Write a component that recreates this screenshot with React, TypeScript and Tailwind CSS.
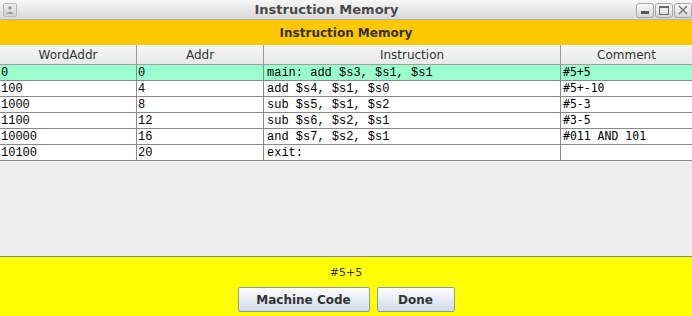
import React from "react";

const rows = [
  { word: "0", addr: "0", ins: "main: add $s3, $s1, $s1", comment: "#5+5" },
  { word: "100", addr: "4", ins: "add $s4, $s1, $s0", comment: "#5+-10" },
  { word: "1000", addr: "8", ins: "sub $s5, $s1, $s2", comment: "#5-3" },
  { word: "1100", addr: "12", ins: "sub $s6, $s2, $s1", comment: "#3-5" },
  { word: "10000", addr: "16", ins: "and $s7, $s2, $s1", comment: "#011 AND 101" },
  { word: "10100", addr: "20", ins: "exit:", comment: "" },
];

const headers = ["WordAddr", "Addr", "Instruction", "Comment"];

const TitleButton = ({ children }: { children: React.ReactNode }) => (
  <div className="w-[18px] h-[15px] flex items-center justify-center rounded-[3px] border border-[#a8a8a8] bg-gradient-to-b from-[#fbfbfb] to-[#d6d6d6]">
    {children}
  </div>
);

export default function App() {
  const sans = "font-['DejaVu_Sans',sans-serif]";
  return (
    <div className={`w-[692px] h-[316px] flex flex-col overflow-hidden bg-[#eeeeee] ${sans}`}>
      {/* window title bar */}
      <div className="h-[20px] shrink-0 flex items-center bg-gradient-to-b from-[#f7f7f7] to-[#d9d9d9] border-b border-[#b5b5b5] pl-[3px]">
        <div className="w-[14px] h-[14px] rounded-[2px] border border-[#b8b8b8] bg-gradient-to-b from-[#f0f0f0] to-[#cfcfcf] flex items-center justify-center">
          <svg width="10" height="10" viewBox="0 0 10 10">
            <circle cx="5" cy="3" r="1.8" fill="#9a9a9a" />
            <path d="M1.5 9 Q5 4.5 8.5 9 Z" fill="#9a9a9a" />
          </svg>
        </div>
        <div className="flex-1 text-center text-[13px] font-bold text-[#4a4a4a] leading-none">
          Instruction Memory
        </div>
        <div className="flex gap-px pt-[1px]">
          <TitleButton>
            <div className="w-[8px] h-[3px] bg-[#5a5a5a] mt-[5px]" />
          </TitleButton>
          <TitleButton>
            <div className="w-[10px] h-[9px] border border-[#6a6a6a] border-t-2" />
          </TitleButton>
          <TitleButton>
            <svg width="10" height="10" viewBox="0 0 10 10">
              <path d="M1 1 L9 9 M9 1 L1 9" stroke="#7a7a7a" strokeWidth="1.5" />
            </svg>
          </TitleButton>
        </div>
      </div>

      {/* orange heading */}
      <div className="h-[25px] shrink-0 bg-[#ffc800] flex items-center justify-center text-[12px] font-bold text-[#333333]">
        Instruction Memory
      </div>

      {/* table */}
      <div className="grid grid-cols-[137px_127px_297px_1fr] shrink-0">
        {headers.map((h, i) => (
          <div
            key={h}
            className={`h-[20px] flex items-center justify-center text-[12px] text-[#333333] bg-gradient-to-b from-[#f6f6f6] to-[#e9e9e9] border-b border-[#a0a0a0] ${i < 3 ? "border-r border-r-[#9a9a9a]" : ""}`}
          >
            {h}
          </div>
        ))}
        {rows.map((r, ri) => {
          const bg = ri === 0 ? "bg-[#99ffcc]" : "bg-white";
          const mono = "font-['Liberation_Mono',monospace] text-[12px]";
          const cell = `h-[16px] flex items-center pl-[1px] text-black border-b border-[#8a8a8a] whitespace-pre ${bg}`;
          return (
            <React.Fragment key={ri}>
              <div className={`${cell} ${mono} border-r border-r-[#8a8a8a]`}>{r.word}</div>
              <div className={`${cell} ${mono} border-r border-r-[#8a8a8a]`}>{r.addr}</div>
              <div className={`${cell} ${mono} pl-[3px] border-r border-r-[#8a8a8a]`}>{r.ins}</div>
              <div className={`${cell} font-['DejaVu_Sans_Mono',monospace] text-[11.5px] pl-[2px]`}>{r.comment}</div>
            </React.Fragment>
          );
        })}
      </div>

      <div className="flex-1 bg-[#eeeeee] border-b border-[#8a8a8a]" />

      {/* yellow status area */}
      <div className="h-[59px] shrink-0 bg-[#ffff00] flex flex-col items-center">
        <div className="h-[30px] flex items-center text-[11px] text-[#333333] pt-[2px]">#5+5</div>
        <div className="flex gap-[7px]">
          <button className="w-[132px] h-[25px] border border-[#8e9aa6] rounded-[2px] bg-gradient-to-b from-[#fdfeff] to-[#cfdce8] text-[12px] font-bold text-[#333333]">
            Machine Code
          </button>
          <button className="w-[78px] h-[25px] border border-[#8e9aa6] rounded-[2px] bg-gradient-to-b from-[#fdfeff] to-[#cfdce8] text-[12px] font-bold text-[#333333]">
            Done
          </button>
        </div>
      </div>
    </div>
  );
}
